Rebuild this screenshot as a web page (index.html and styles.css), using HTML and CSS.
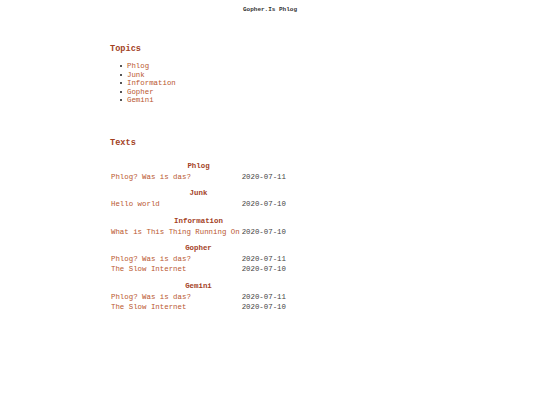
FILE: index.html
```html
<!DOCTYPE html>
<html>
<head>
<meta charset="utf-8">
<title>Gopher.Is Phlog</title>
<link rel="stylesheet" href="styles.css">
</head>
<body>
<header class="site-title">Gopher.Is Phlog</header>
<main class="content">
  <h3 class="section-heading topics-heading">Topics</h3>
  <ul class="topic-list">
    <li><a href="#">Phlog</a></li>
    <li><a href="#">Junk</a></li>
    <li><a href="#">Information</a></li>
    <li><a href="#">Gopher</a></li>
    <li><a href="#">Gemini</a></li>
  </ul>
  <h3 class="section-heading texts-heading">Texts</h3>
  <table class="texts">
    <tbody class="group first">
      <tr><th colspan="2">Phlog</th></tr>
      <tr><td><a href="#">Phlog? Was is das?</a></td><td class="date">2020-07-11</td></tr>
    </tbody>
    <tbody class="group">
      <tr><th colspan="2">Junk</th></tr>
      <tr><td><a href="#">Hello world</a></td><td class="date">2020-07-10</td></tr>
    </tbody>
    <tbody class="group">
      <tr><th colspan="2">Information</th></tr>
      <tr><td><a href="#">What is This Thing Running On</a></td><td class="date">2020-07-10</td></tr>
    </tbody>
    <tbody class="group">
      <tr><th colspan="2">Gopher</th></tr>
      <tr><td><a href="#">Phlog? Was is das?</a></td><td class="date">2020-07-11</td></tr>
      <tr><td><a href="#">The Slow Internet</a></td><td class="date">2020-07-10</td></tr>
    </tbody>
    <tbody class="group">
      <tr><th colspan="2">Gemini</th></tr>
      <tr><td><a href="#">Phlog? Was is das?</a></td><td class="date">2020-07-11</td></tr>
      <tr><td><a href="#">The Slow Internet</a></td><td class="date">2020-07-10</td></tr>
    </tbody>
  </table>
</main>
</body>
</html>
```
FILE: styles.css
```css
html, body {
  margin: 0;
  padding: 0;
  background: #ffffff;
}
body {
  font-family: "Liberation Mono", "DejaVu Sans Mono", monospace;
  font-size: 7.4px;
  color: #444444;
}
a {
  color: #b9572f;
  text-decoration: none;
}
.site-title {
  text-align: center;
  font-size: 6px;
  font-weight: bold;
  color: #333333;
  padding-top: 6px;
  line-height: 7px;
}
.content {
  width: 320px;
  margin: 0 auto;
}
.section-heading {
  font-size: 8.6px;
  font-weight: bold;
  color: #a3421f;
  margin: 0;
  line-height: 10px;
}
.topics-heading {
  margin-top: 31px;
}
.topic-list {
  margin: 8px 0 0 0;
  padding-left: 17px;
  line-height: 8.5px;
  list-style: none;
}
.topic-list li::before {
  content: "";
  display: inline-block;
  width: 2px;
  height: 2px;
  background: #555555;
  vertical-align: middle;
  margin-left: -7px;
  margin-right: 5px;
}
.texts-heading {
  margin-top: 33px;
}
.texts {
  border-collapse: collapse;
  margin-top: 13px;
  margin-left: 1px;
}
.texts th {
  color: #a3421f;
  font-weight: bold;
  text-align: center;
  padding: 6.5px 0 0 0;
  line-height: 11px;
}
.texts .first th {
  padding-top: 0;
}
.texts td {
  padding: 0;
  line-height: 10px;
  white-space: nowrap;
}
.texts td.date {
  padding-left: 2px;
}
```
